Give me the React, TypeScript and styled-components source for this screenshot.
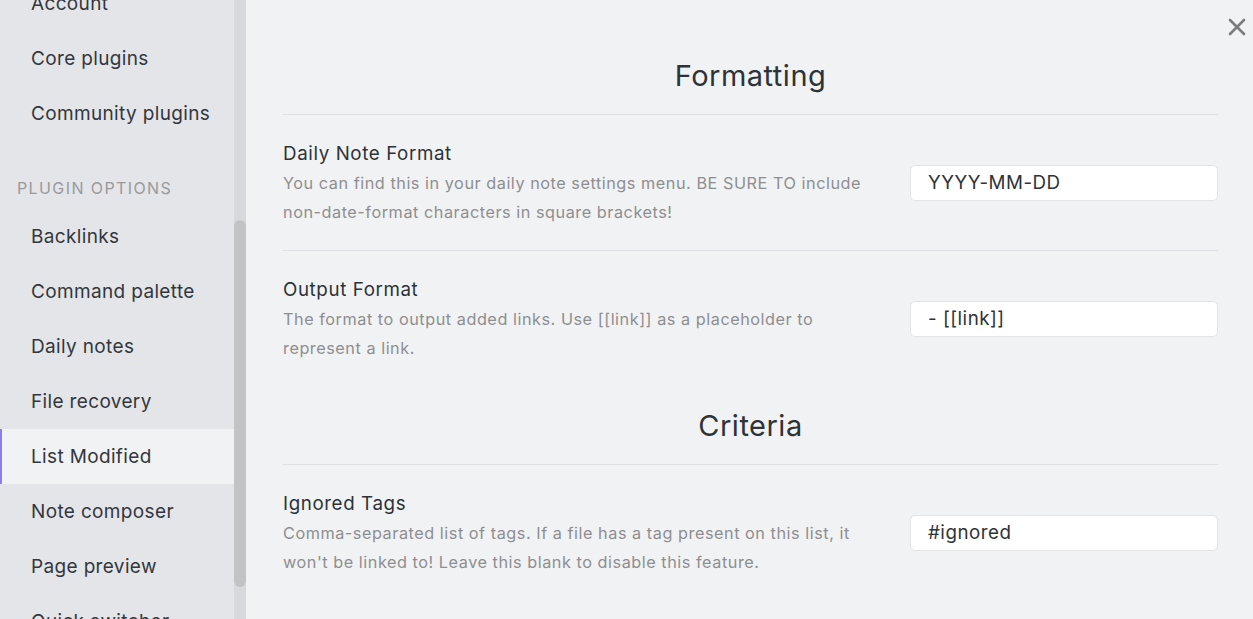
import React from "react";
import styled, { createGlobalStyle } from "styled-components";

const GlobalStyle = createGlobalStyle`
  html, body { margin: 0; padding: 0; height: 100%; overflow: hidden; }
  body { font-family: Inter, "Noto Sans", sans-serif; -webkit-font-smoothing: antialiased; }
  #root { height: 100%; }
`;

const Shell = styled.div`
  display: flex;
  width: 1253px;
  height: 619px;
  position: relative;
  background: #f1f2f4;
  color: #2e3338;
  overflow: hidden;
`;

const Sidebar = styled.nav`
  width: 234px;
  flex: 0 0 234px;
  background: #e4e5e9;
  overflow: hidden;
`;

const NavList = styled.div`
  display: flex;
  flex-direction: column;
  margin-top: -24px;
`;

const NavItem = styled.div<{ $active?: boolean }>`
  height: 55px;
  flex: 0 0 55px;
  display: flex;
  align-items: center;
  padding-left: 31px;
  font-size: 19px;
  letter-spacing: 0.35px;
  color: #33373d;
  white-space: nowrap;
  background: ${(p) => (p.$active ? "#f1f2f4" : "transparent")};
  box-shadow: ${(p) => (p.$active ? "inset 2px 0 0 #8b7cf0" : "none")};
`;

const NavGroup = styled.div`
  padding: 36px 0 10px 17px;
  font-size: 16px;
  line-height: 22px;
  letter-spacing: 1.4px;
  text-transform: uppercase;
  color: #9a9a9c;
`;

const Track = styled.div`
  width: 12px;
  flex: 0 0 12px;
  background: #d8d9dd;
  display: flex;
  flex-direction: column;
`;

const Thumb = styled.div`
  margin-top: 220px;
  height: 367px;
  border-radius: 6px;
  background: #c2c3c5;
`;

const Main = styled.main`
  flex: 1;
  padding: 36px 35px 0 37px;
  display: flex;
  flex-direction: column;
`;

const SectionHeading = styled.h2`
  margin: 22px 0 0;
  padding-bottom: 20px;
  border-bottom: 1px solid #dfe0e3;
  font-size: 29px;
  line-height: 36px;
  letter-spacing: 0.5px;
  font-weight: 400;
  text-align: center;
  color: #2e3338;
`;

const Item = styled.div<{ $divider?: boolean }>`
  display: flex;
  align-items: center;
  gap: 40px;
  padding: 27px 0 23px;
  border-bottom: ${(p) => (p.$divider ? "1px solid #dfe0e3" : "none")};
`;

const Info = styled.div`
  flex: 1;
  min-width: 0;
`;

const Name = styled.div`
  font-size: 18.75px;
  line-height: 24px;
  letter-spacing: 0.6px;
  margin-bottom: 3px;
  color: #2e3338;
`;

const Description = styled.div`
  font-size: 16.25px;
  line-height: 29px;
  letter-spacing: 0.53px;
  color: #8e8e90;
`;

const TextInput = styled.input`
  width: 308px;
  height: 36px;
  box-sizing: border-box;
  flex: 0 0 308px;
  margin-bottom: 4px;
  border: 1px solid #e3e4e6;
  border-radius: 5px;
  background: #ffffff;
  padding: 0 17px;
  font-family: Inter, "Noto Sans", sans-serif;
  font-size: 18.75px;
  letter-spacing: 0.5px;
  color: #2e3338;
  outline: none;
`;

const Close = styled.button`
  position: absolute;
  top: 16px;
  right: 5px;
  width: 22px;
  height: 22px;
  border: none;
  background: transparent;
  padding: 0;
  display: flex;
  align-items: center;
  justify-content: center;
  color: #7c7c7e;
`;

const navTop = ["Account", "Core plugins", "Community plugins"];
const navPlugins = [
  "Backlinks",
  "Command palette",
  "Daily notes",
  "File recovery",
  "List Modified",
  "Note composer",
  "Page preview",
  "Quick switcher",
];

export default function App() {
  return (
    <>
      <GlobalStyle />
      <Shell>
        <Sidebar>
          <NavList>
            {navTop.map((n) => (
              <NavItem key={n}>{n}</NavItem>
            ))}
            <NavGroup>Plugin options</NavGroup>
            {navPlugins.map((n) => (
              <NavItem key={n} $active={n === "List Modified"}>
                {n}
              </NavItem>
            ))}
          </NavList>
        </Sidebar>
        <Track>
          <Thumb />
        </Track>
        <Main>
          <SectionHeading>Formatting</SectionHeading>
          <Item $divider>
            <Info>
              <Name>Daily Note Format</Name>
              <Description>
                You can find this in your daily note settings menu. BE SURE TO include
                non-date-format characters in square brackets!
              </Description>
            </Info>
            <TextInput defaultValue="YYYY-MM-DD" />
          </Item>
          <Item>
            <Info>
              <Name>Output Format</Name>
              <Description>
                The format to output added links. Use [[link]] as a placeholder to
                represent a link.
              </Description>
            </Info>
            <TextInput defaultValue="- [[link]]" />
          </Item>
          <SectionHeading>Criteria</SectionHeading>
          <Item>
            <Info>
              <Name>Ignored Tags</Name>
              <Description>
                Comma-separated list of tags. If a file has a tag present on this list, it
                won't be linked to! Leave this blank to disable this feature.
              </Description>
            </Info>
            <TextInput defaultValue="#ignored" />
          </Item>
        </Main>
        <Close aria-label="Close">
          <svg width="18" height="18" viewBox="0 0 18 18" fill="none">
            <path d="M2 2L16 16M16 2L2 16" stroke="currentColor" strokeWidth="2.6" strokeLinecap="round" />
          </svg>
        </Close>
      </Shell>
    </>
  );
}
